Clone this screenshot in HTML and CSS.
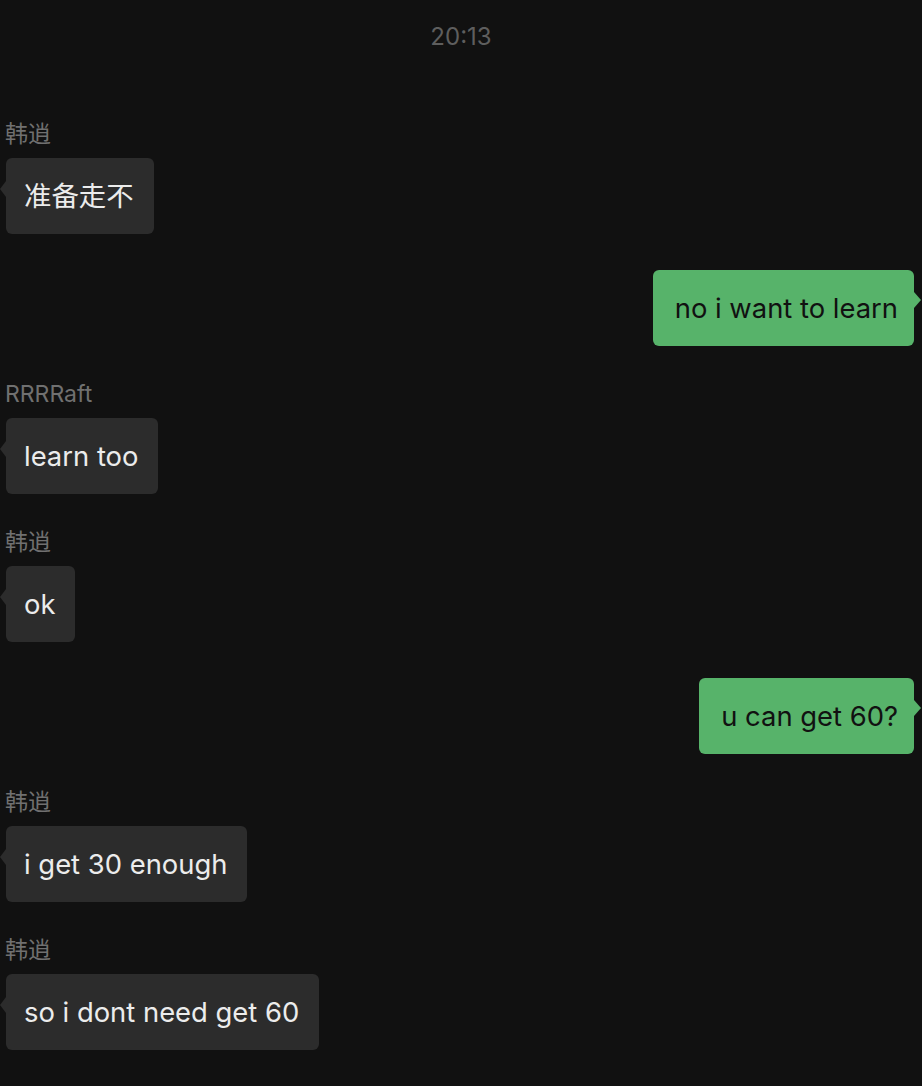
FILE: index.html
```html
<!DOCTYPE html>
<html lang="zh">
<head>
<meta charset="utf-8">
<link rel="stylesheet" href="styles.css">
</head>
<body>
<div class="chat">
  <div class="time">20:13</div>
  <div class="msg in">
    <div class="name">韩逍</div>
    <div class="bubble">准备走不</div>
  </div>
  <div class="msg out">
    <div class="bubble">no i want to learn</div>
  </div>
  <div class="msg in">
    <div class="name">RRRRaft</div>
    <div class="bubble">learn too</div>
  </div>
  <div class="msg in">
    <div class="name">韩逍</div>
    <div class="bubble">ok</div>
  </div>
  <div class="msg out">
    <div class="bubble">u can get 60?</div>
  </div>
  <div class="msg in">
    <div class="name">韩逍</div>
    <div class="bubble">i get 30 enough</div>
  </div>
  <div class="msg in">
    <div class="name">韩逍</div>
    <div class="bubble">so i dont need get 60</div>
  </div>
</div>
</body>
</html>
```
FILE: styles.css
```css
html, body {
  margin: 0;
  padding: 0;
  background: #111111;
  height: 100%;
}
body {
  font-family: "Inter", "Noto Sans CJK SC", sans-serif;
  overflow: hidden;
}
.chat {
  display: flex;
  flex-direction: column;
  padding: 25px 8px 0 6px;
}
.time {
  text-align: center;
  color: #5e5e5e;
  font-size: 24px;
  line-height: 24px;
  height: 24px;
  margin-bottom: 73px;
  margin-left: -6px;
  margin-right: -8px;
}
.msg {
  display: flex;
  flex-direction: column;
  margin-bottom: 36px;
}
.msg.in { align-items: flex-start; }
.msg.out { align-items: flex-end; }
.name {
  color: #707070;
  font-size: 23px;
  line-height: 24px;
  margin-left: -1px;
  margin-bottom: 12px;
}
.bubble {
  position: relative;
  font-size: 27.4px;
  line-height: 38px;
  padding: 19px 20px 19px 18px;
  border-radius: 6px;
  background: #2c2c2c;
  color: #ececec;
}
.msg.in .bubble::before {
  content: "";
  position: absolute;
  left: -6px;
  top: 23px;
  border-style: solid;
  border-width: 8px 6px 8px 0;
  border-color: transparent #2c2c2c transparent transparent;
}
.msg.out .bubble {
  background: #57b36a;
  color: #111111;
  padding: 19px 16px 19px 22px;
}
.msg.out .bubble::after {
  content: "";
  position: absolute;
  right: -7px;
  top: 22px;
  border-style: solid;
  border-width: 8px 0 8px 7px;
  border-color: transparent transparent transparent #57b36a;
}
```
